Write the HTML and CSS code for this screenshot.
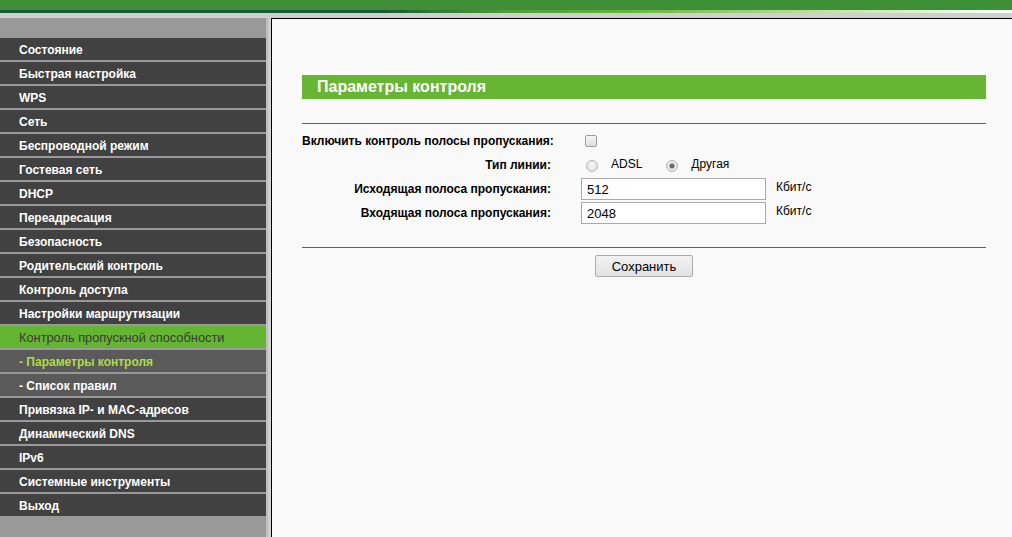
FILE: index.html
```html
<!DOCTYPE html>
<html lang="ru">
<head>
<meta charset="utf-8">
<title>Параметры контроля</title>
<link rel="stylesheet" href="styles.css">
</head>
<body>
<header class="top">
  <div class="top-green"></div>
  <div class="top-line"></div>
</header>
<div class="frame">
  <nav class="sidebar">
    <ul class="menu">
      <li class="item">Состояние</li>
      <li class="item">Быстрая настройка</li>
      <li class="item">WPS</li>
      <li class="item">Сеть</li>
      <li class="item">Беспроводной режим</li>
      <li class="item">Гостевая сеть</li>
      <li class="item">DHCP</li>
      <li class="item">Переадресация</li>
      <li class="item">Безопасность</li>
      <li class="item">Родительский контроль</li>
      <li class="item">Контроль доступа</li>
      <li class="item">Настройки маршрутизации</li>
      <li class="item active">Контроль пропускной способности</li>
      <li class="item sub current">- Параметры контроля</li>
      <li class="item sub">- Список правил</li>
      <li class="item">Привязка IP- и MAC-адресов</li>
      <li class="item">Динамический DNS</li>
      <li class="item">IPv6</li>
      <li class="item">Системные инструменты</li>
      <li class="item">Выход</li>
    </ul>
  </nav>
  <main class="content">
    <h1 class="title">Параметры контроля</h1>
    <div class="rule"></div>
    <div class="form">
      <div class="row">
        <div class="label">Включить контроль полосы пропускания:</div>
        <div class="value"><input type="checkbox" class="check"></div>
      </div>
      <div class="row">
        <div class="label">Тип линии:</div>
        <div class="value">
          <input type="radio" name="line" class="radio"><span class="opt">ADSL</span>
          <input type="radio" name="line" class="radio radio2" checked><span class="opt">Другая</span>
        </div>
      </div>
      <div class="row">
        <div class="label">Исходящая полоса пропускания:</div>
        <div class="value"><input type="text" class="field" value="512"><span class="unit">Кбит/с</span></div>
      </div>
      <div class="row">
        <div class="label">Входящая полоса пропускания:</div>
        <div class="value"><input type="text" class="field" value="2048"><span class="unit">Кбит/с</span></div>
      </div>
    </div>
    <div class="rule rule2"></div>
    <div class="actions"><button class="btn" type="button">Сохранить</button></div>
  </main>
</div>
</body>
</html>
```

FILE: styles.css
```css
* { box-sizing: border-box; }
html, body { margin: 0; padding: 0; }
body {
  font-family: "Liberation Sans", Arial, sans-serif;
  font-size: 12px;
  width: 1012px;
  height: 537px;
  overflow: hidden;
  background: #cfcfcf;
}
.top-green { height: 10px; background: #3d9035; }
.top-line {
  height: 3px;
  background: linear-gradient(to right, #1c5a37 0%, #1c5a37 38%, #4f9e36 50%, #66b636 62%, #b9dd9a 80%, #ffffff 100%);
}
.frame {
  display: flex;
  height: 524px;
  padding-top: 5px;
  background: #cfcfcf;
}
.sidebar {
  width: 268px;
  flex: none;
  background: #999999;
  border-right: 2px solid #bdbdbd;
  padding-top: 20px;
  margin-right: 3px;
}
.menu { list-style: none; margin: 0; padding: 0; }
.item {
  height: 22px;
  line-height: 24px;
  margin-bottom: 2px;
  padding-left: 19px;
  background: #414141;
  color: #ffffff;
  font-weight: bold;
  font-size: 12px;
  white-space: nowrap;
  overflow: hidden;
}
.item.active {
  background: #63b532;
  color: #3a3a3a;
  font-weight: normal;
  font-size: 12.8px;
}
.item.sub { background: #5a5a5a; }
.item.current { color: #aedc4c; }
.content {
  flex: 1;
  background: #f9f9f9;
  border-top: 1px solid #000;
  border-left: 1px solid #000;
  padding: 56px 26px 0 30px;
}
.title {
  margin: 0;
  height: 24px;
  line-height: 24px;
  padding-left: 15px;
  background: #66b533;
  color: #ffffff;
  font-size: 16px;
  font-weight: bold;
}
.rule {
  height: 1px;
  background: #347a45;
  margin-top: 24px;
}
.form { padding-top: 4px; }
.row {
  display: grid;
  grid-template-columns: 279px 1fr;
  height: 24px;
  align-items: center;
}
.label {
  text-align: right;
  padding-right: 30px;
  padding-top: 1px;
  font-weight: bold;
  color: #000;
  white-space: nowrap;
}
.value {
  display: flex;
  align-items: center;
  color: #000;
}
.check {
  appearance: none;
  -webkit-appearance: none;
  width: 12px;
  height: 12px;
  margin: 2px 0 0 4px;
  border: 1px solid #9c9c9c;
  border-radius: 2px;
  background: linear-gradient(#f6f6f6, #dedede);
}
.radio {
  appearance: none;
  -webkit-appearance: none;
  width: 12px;
  height: 12px;
  margin: 4px 0 0 5px;
  border: 1px solid #b4b4b4;
  border-radius: 50%;
  background: radial-gradient(circle at 50% 40%, #f7f7f7 0, #dcdcdc 100%);
}
.radio:checked {
  background: radial-gradient(circle, #6b6b6b 0, #6b6b6b 2px, #e4e4e4 3px, #f2f2f2 100%);
}
.radio2 { margin-left: 24px; }
.opt { margin-left: 13px; }
.field {
  width: 185px;
  height: 22px;
  margin: 2px 0 0 0;
  border: 1px solid #a9a9a9;
  background: #fff;
  padding: 0 5px;
  font-family: "Liberation Sans", Arial, sans-serif;
  font-size: 13px;
  color: #000;
  outline: none;
}
.unit { margin-left: 10px; margin-top: -2px; }
.rule2 { margin-top: 23px; }
.actions {
  display: flex;
  justify-content: center;
  padding-top: 7px;
}
.btn {
  width: 98px;
  height: 22px;
  border: 1px solid #acacac;
  border-radius: 2px;
  background: linear-gradient(#f2f2f2, #e2e2e2);
  font-family: "Liberation Sans", Arial, sans-serif;
  font-size: 13px;
  color: #000;
  padding: 0;
}
```
